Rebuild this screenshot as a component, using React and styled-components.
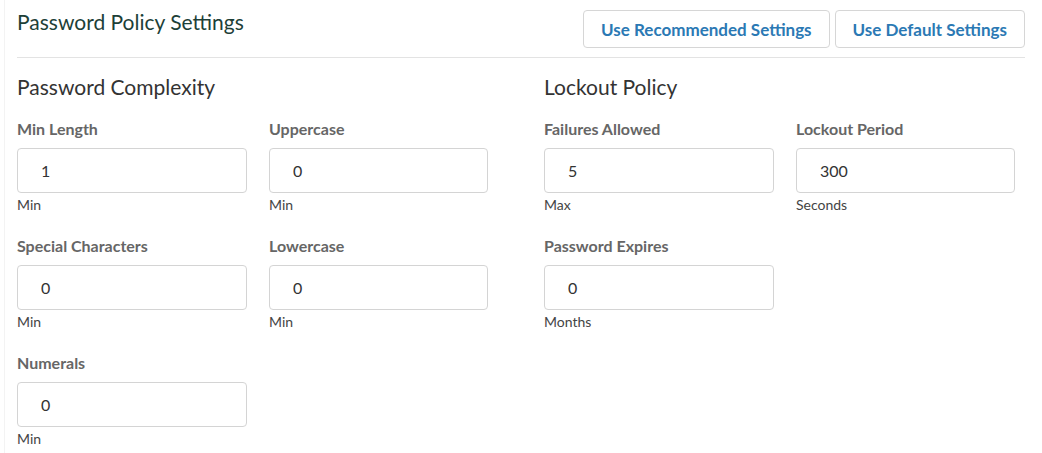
import React from "react";
import styled, { createGlobalStyle } from "styled-components";

const Global = createGlobalStyle`
  html, body { margin: 0; padding: 0; background: #fff; }
  body { font-family: Lato, "Open Sans", sans-serif; }
  * { box-sizing: border-box; }
`;

const Frame = styled.div`
  margin-left: 4px;
  border-left: 1px solid #f3f3f3;
  padding-left: 12px;
  min-height: 453px;
`;

const Panel = styled.div`
  width: 1008px;
`;

const Header = styled.div`
  display: flex;
  justify-content: space-between;
  align-items: flex-start;
  padding-top: 10px;
  padding-bottom: 9px;
  border-bottom: 1px solid #e3e3e3;
`;

const Title = styled.h1`
  margin: 0;
  font-size: 21px;
  line-height: 24px;
  font-weight: 400;
  color: #1d3f38;
`;

const ButtonGroup = styled.div`
  display: flex;
  gap: 5px;
`;

const Button = styled.button`
  height: 38px;
  padding: 0 17px;
  background: #fff;
  border: 1px solid #d6d6d6;
  border-radius: 4px;
  font-family: inherit;
  font-size: 17px;
  font-weight: 700;
  color: #2b79b4;
  cursor: pointer;
`;

const Columns = styled.div`
  display: grid;
  grid-template-columns: 527px 1fr;
  margin-top: 17px;
`;

const Section = styled.section``;

const SectionTitle = styled.h2`
  margin: 0 0 20px;
  font-size: 21px;
  line-height: 24px;
  font-weight: 400;
  color: #333;
`;

const FieldGrid = styled.div`
  display: grid;
  grid-template-columns: 230px 219px;
  column-gap: 22px;
  row-gap: 23px;
`;

const Field = styled.div`
  display: flex;
  flex-direction: column;
`;

const Label = styled.label`
  font-size: 16px;
  line-height: 20px;
  font-weight: 700;
  color: #666;
  margin-bottom: 9px;
`;

const Input = styled.input`
  height: 45px;
  width: 100%;
  border: 1px solid #d4d4d4;
  border-radius: 4px;
  padding: 0 0 0 23px;
  font-family: inherit;
  font-size: 16px;
  color: #333;
  background: #fff;
  outline: none;
`;

const Helper = styled.div`
  margin-top: 3px;
  font-size: 14px;
  line-height: 17px;
  color: #444;
`;

const complexity = [
  { label: "Min Length", value: "1", help: "Min" },
  { label: "Uppercase", value: "0", help: "Min" },
  { label: "Special Characters", value: "0", help: "Min" },
  { label: "Lowercase", value: "0", help: "Min" },
  { label: "Numerals", value: "0", help: "Min" },
];

const lockout = [
  { label: "Failures Allowed", value: "5", help: "Max" },
  { label: "Lockout Period", value: "300", help: "Seconds" },
  { label: "Password Expires", value: "0", help: "Months" },
];

function FieldItem({ label, value, help }) {
  return (
    <Field>
      <Label>{label}</Label>
      <Input defaultValue={value} />
      <Helper>{help}</Helper>
    </Field>
  );
}

export default function App() {
  return (
    <>
      <Global />
      <Frame>
        <Panel>
          <Header>
            <Title>Password Policy Settings</Title>
            <ButtonGroup>
              <Button>Use Recommended Settings</Button>
              <Button>Use Default Settings</Button>
            </ButtonGroup>
          </Header>
          <Columns>
            <Section>
              <SectionTitle>Password Complexity</SectionTitle>
              <FieldGrid>
                {complexity.map((f) => (
                  <FieldItem key={f.label} {...f} />
                ))}
              </FieldGrid>
            </Section>
            <Section>
              <SectionTitle>Lockout Policy</SectionTitle>
              <FieldGrid>
                {lockout.map((f) => (
                  <FieldItem key={f.label} {...f} />
                ))}
              </FieldGrid>
            </Section>
          </Columns>
        </Panel>
      </Frame>
    </>
  );
}
